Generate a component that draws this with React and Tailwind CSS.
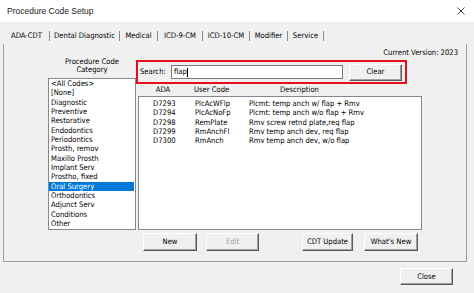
import React from 'react';

const TABS = [
  { label: 'ADA-CDT', w: 'w-[46px]' },
  { label: 'Dental Diagnostic', w: 'w-[70px]' },
  { label: 'Medical', w: 'w-[38px]' },
  { label: 'ICD-9-CM', w: 'w-[45px]' },
  { label: 'ICD-10-CM', w: 'w-[47px]' },
  { label: 'Modifier', w: 'w-[38px]' },
  { label: 'Service', w: 'w-[36px]' },
];

const CATEGORIES = [
  '<All Codes>', '[None]', 'Diagnostic', 'Preventive', 'Restorative', 'Endodontics',
  'Periodontics', 'Prosth, remov', 'Maxillo Prosth', 'Implant Serv', 'Prostho, fixed',
  'Oral Surgery', 'Orthodontics', 'Adjunct Serv', 'Conditions', 'Other',
];

const CODES = [
  ['D7293', 'PlcAcWFlp', 'Plcmt: temp anch w/ flap + Rmv'],
  ['D7294', 'PlcAcNoFp', 'Plcmt: temp anch w/o flap + Rmv'],
  ['D7298', 'RemPlate', 'Rmv screw retnd plate,req flap'],
  ['D7299', 'RmAnchFl', 'Rmv temp anch dev, req flap'],
  ['D7300', 'RmAnch', 'Rmv temp anch dev, w/o flap'],
];

// classic 3D push button
const Btn = ({ children, className = '', disabled = false }) => (
  <div
    className={`flex items-center justify-center bg-[#f0f0f0] border border-t-white border-l-white border-r-[#5a5a5a] border-b-[#5a5a5a] shadow-[inset_-1px_-1px_0_#a0a0a0] leading-none ${disabled ? 'text-[#a0a0a0]' : 'text-black'} ${className}`}
  >
    {children}
  </div>
);

export default function App() {
  return (
    <div className="w-[474px] h-[293px] bg-[#f0f0f0] flex flex-col overflow-hidden font-['DejaVu_Sans_Condensed','Liberation_Sans',Arial,sans-serif] text-[7.6px] text-black">
      {/* Title bar */}
      <div className="h-[22px] bg-white flex items-center justify-between pl-[7px] pr-[8px]">
        <span className="text-[8.5px] text-[#222] font-['Liberation_Sans',Arial,sans-serif]">Procedure Code Setup</span>
        <svg width="8" height="8" viewBox="0 0 8 8" className="mr-[1px]">
          <path d="M0.5 0.5 L7.5 7.5 M7.5 0.5 L0.5 7.5" stroke="#333" strokeWidth="0.9" />
        </svg>
      </div>

      {/* Tabs */}
      <div className="h-[22px] flex items-end pl-[4px]">
        {TABS.map((t) => (
          <div
            key={t.label}
            className={`${t.w} h-[10px] mb-[3px] flex items-center justify-center border-r border-[#8a8a8a] leading-[10px] whitespace-nowrap`}
          >
            {t.label}
          </div>
        ))}
      </div>

      {/* Tab panel */}
      <div className="ml-[3px] w-[464px] h-[218px] border-l border-r border-b border-[#a0a0a0] flex flex-col">
        <div className="pt-[4px] h-[14px] leading-[10px] text-right pr-[8px]">Current Version: 2023</div>

        <div className="flex pl-[44px]">
          {/* Category column */}
          <div className="w-[88px] flex flex-col">
            <div className="text-center leading-[8px]">
              Procedure Code
              <br />
              Category
            </div>
            <div className="mt-[4px] h-[152px] bg-white border border-[#828790] pr-[1px]">
              {CATEGORIES.map((c) => (
                <div
                  key={c}
                  className={`h-[9.35px] leading-[9.35px] pl-[2px] whitespace-nowrap ${c === 'Oral Surgery' ? 'bg-[#0078d7] text-white' : ''}`}
                >
                  {c}
                </div>
              ))}
            </div>
          </div>

          {/* Codes column */}
          <div className="flex flex-col">
            <div className="mt-[2px] w-[271px] h-[24px] border-2 border-[#e0101e] flex items-center pl-[2px]">
              <span className="w-[31px]">Search:</span>
              <div className="w-[172px] h-[14px] bg-white border border-[#7a7a7a] flex items-center pl-[2px]">
                <span>flap</span>
                <span className="w-px h-[9px] bg-black" />
              </div>
              <Btn className="ml-[6px] w-[53px] h-[17px]">Clear</Btn>
            </div>

            <div className="h-[12px] flex items-center leading-none">
              <span className="ml-[12px] w-[30px] text-center">ADA</span>
              <span className="ml-[16px] w-[86px]">User Code</span>
              <span>Description</span>
            </div>

            <div className="ml-[2px] w-[284px] h-[134px] bg-white border border-[#828790] pt-[2px]">
              {CODES.map(([ada, uc, desc]) => (
                <div key={ada} className="flex h-[9.35px] leading-[9.35px] whitespace-nowrap">
                  <span className="ml-[14px] w-[42px]">{ada}</span>
                  <span className="w-[54px]">{uc}</span>
                  <span>{desc}</span>
                </div>
              ))}
            </div>
          </div>
        </div>

        {/* Action buttons */}
        <div className="flex mt-[3px] pl-[139px]">
          <Btn className="w-[54px] h-[18px]">New</Btn>
          <Btn className="ml-[9px] w-[53px] h-[18px]" disabled>Edit</Btn>
          <Btn className="ml-[43px] w-[51px] h-[18px]">CDT Update</Btn>
          <Btn className="ml-[11px] w-[54px] h-[18px]">What's New</Btn>
        </div>
      </div>

      {/* Bottom */}
      <div className="flex justify-end pr-[21px] mt-[6px]">
        <Btn className="w-[53px] h-[17px]">Close</Btn>
      </div>
    </div>
  );
}
